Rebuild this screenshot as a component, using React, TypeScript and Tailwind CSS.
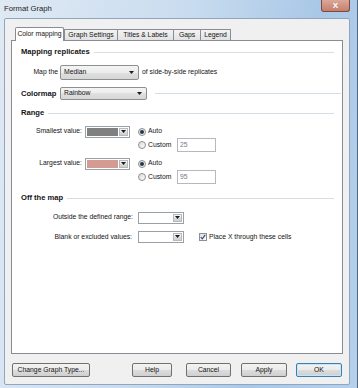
import React from 'react';

// Small black down-arrow used by the combo boxes
const Arrow = () => (
  <svg width="5" height="3" viewBox="0 0 5 3">
    <path d="M0 0H5L2.5 3Z" fill="#1b1b1b" />
  </svg>
);

const SectionHeading = ({ title, className = '' }: { title: string; className?: string }) => (
  <div className={`flex h-[12px] items-center ${className}`}>
    <span className="text-[7.6px] font-bold leading-none">{title}</span>
    <div className="ml-[4px] h-px flex-1 bg-[#d5dfe5]" />
  </div>
);

// Drop-down list that looks like a button (Median / Rainbow)
const DropList = ({ label, className }: { label: string; className: string }) => (
  <div
    className={`flex items-center justify-between rounded-[2px] border border-[#8e8f8f] bg-[linear-gradient(#f4f4f4,#ececec_50%,#e0e0e0_50%,#d6d6d6)] pl-[3px] pr-[4px] ${className}`}
  >
    <span className="leading-none">{label}</span>
    <Arrow />
  </div>
);

const ArrowButton = () => (
  <div className="flex w-[9px] items-center justify-center border border-[#b5b8bd] bg-[linear-gradient(#f4f4f4,#e6e6e6_50%,#d9d9d9_50%,#d0d0d0)]">
    <Arrow />
  </div>
);

const SwatchCombo = ({ swatch }: { swatch: string }) => (
  <div className="flex h-[12px] w-[45px] border border-[#9aa0a8] bg-white p-px">
    <div className={`mr-[1px] flex-1 ${swatch}`} />
    <ArrowButton />
  </div>
);

const EmptyCombo = () => (
  <div className="flex h-[12px] w-[46px] justify-end border border-[#9aa0a8] bg-white p-px">
    <ArrowButton />
  </div>
);

const Radio = ({ checked }: { checked?: boolean }) => (
  <span className="flex h-[8px] w-[8px] items-center justify-center rounded-full border border-[#8e8f8f] bg-gradient-to-br from-[#dcdcdc] to-[#fbfbfb]">
    {checked && <span className="h-[4px] w-[4px] rounded-full bg-[#25364a]" />}
  </span>
);

const Checkbox = () => (
  <span className="flex h-[8px] w-[8px] items-center justify-center border border-[#8e8f8f] bg-gradient-to-br from-[#dedede] to-[#fbfbfb]">
    <svg width="6" height="6" viewBox="0 0 6 6">
      <path d="M0.8 3.2L2.3 4.8L5.2 0.9" stroke="#3a4f86" strokeWidth="1.2" fill="none" />
    </svg>
  </span>
);

const CustomInput = ({ value }: { value: string }) => (
  <div className="flex h-[14px] w-[39px] items-center border border-[#b4b8c0] bg-white pl-[2px] text-[#7a7a7a]">
    <span className="leading-none">{value}</span>
  </div>
);

const RangeGroup = ({ label, swatch, custom, className = '' }: { label: string; swatch: string; custom: string; className?: string }) => (
  <div className={className}>
    <div className="flex h-[13px] items-center">
      <span className="w-[61px] text-right leading-none">{label}</span>
      <div className="ml-[3px]">
        <SwatchCombo swatch={swatch} />
      </div>
      <div className="ml-[8px] flex items-center gap-[2px]">
        <Radio checked />
        <span className="leading-none">Auto</span>
      </div>
    </div>
    <div className="flex h-[14px] items-center pl-[117px]">
      <div className="flex w-[39px] items-center gap-[2px]">
        <Radio />
        <span className="leading-none">Custom</span>
      </div>
      <CustomInput value={custom} />
    </div>
  </div>
);

const Btn = ({ label, className = '', primary = false }: { label: string; className?: string; primary?: boolean }) => (
  <div
    className={`flex h-[14px] items-center justify-center rounded-[2px] border bg-[linear-gradient(#f3f3f3,#ebebeb_50%,#dddddd_50%,#cfcfcf)] ${
      primary ? 'border-[#3c7fb1] shadow-[inset_0_0_0_1px_#c6e6f8]' : 'border-[#707070]'
    } ${className}`}
  >
    <span className="leading-none">{label}</span>
  </div>
);

const tabs = ['Graph Settings', 'Titles & Labels', 'Gaps', 'Legend'];
const tabWidths = ['w-[54px]', 'w-[57px]', 'w-[28px]', 'w-[31px]'];

export default function App() {
  return (
    <div
      className="flex h-[388px] w-[358px] flex-col border-r border-[#56677a] bg-[linear-gradient(100deg,#dfe9f4,#c9dcef_45%,#a9c8e7_75%,#b4d0ec)] text-[6.8px] text-[#141414]"
      style={{ fontFamily: '"Liberation Sans", Arial, sans-serif' }}
    >
      {/* Title bar */}
      <div className="flex h-[18px] items-start">
        <span className="ml-[4px] mt-[5px] text-[7.7px] leading-none text-[#1c1c1c]">Format Graph</span>
        <div className="ml-auto mr-[7px] flex h-[12px] w-[29px] items-center justify-center rounded-b-[3px] border border-t-0 border-[#7d4a40] bg-gradient-to-b from-[#dba898] to-[#c47f6c]">
          <span className="text-[8px] font-bold leading-none text-white">X</span>
        </div>
      </div>

      {/* Client area */}
      <div className="mb-[3px] ml-[4px] mr-[7px] flex flex-1 flex-col rounded-[2px] border border-[#8ea6bf] bg-[#f0f0f0] px-[6px] pt-[8px]">
        {/* Tabs */}
        <div className="flex h-[13px] items-end pl-[4px]">
          <div className="relative z-10 -mb-px flex h-[14px] w-[49px] items-center justify-center rounded-t-[2px] border border-b-0 border-[#898c95] bg-white">
            <span className="leading-none">Color mapping</span>
          </div>
          {tabs.map((t, i) => (
            <div
              key={t}
              className={`flex h-[11px] items-center justify-center rounded-t-[1px] border border-b-0 border-[#898c95] bg-gradient-to-b from-[#f3f3f3] to-[#e2e2e2] ${tabWidths[i]} ${
                i > 0 ? '-ml-px' : ''
              }`}
            >
              <span className="leading-none">{t}</span>
            </div>
          ))}
        </div>

        {/* Tab panel */}
        <div className="flex h-[314px] flex-col border border-[#898c95] bg-white pl-[9px] pr-[8px] pt-[5px]">
          <SectionHeading title="Mapping replicates" />

          <div className="mt-[7px] flex h-[15px] items-center">
            <span className="w-[37px] text-right leading-none">Map the</span>
            <DropList label="Median" className="ml-[2px] h-[15px] w-[79px]" />
            <span className="ml-[3px] leading-none">of side-by-side replicates</span>
          </div>

          <div className="mt-[7px] mr-[-7px] flex h-[13px] items-center">
            <span className="w-[39px] text-[7.6px] font-bold leading-none">Colormap</span>
            <DropList label="Rainbow" className="h-[13px] w-[87px]" />
            <div className="ml-[8px] h-px flex-1 bg-[#d5dfe5]" />
          </div>

          <SectionHeading title="Range" className="mt-[7px]" />
          <RangeGroup label="Smallest value:" swatch="bg-[#808080]" custom="25" className="mt-[6px]" />
          <RangeGroup label="Largest value:" swatch="bg-[#d49b93]" custom="95" className="mt-[5px]" />

          <SectionHeading title="Off the map" className="mt-[8px]" />

          <div className="mt-[7px] flex h-[13px] items-center">
            <span className="w-[112px] text-right leading-none">Outside the defined range:</span>
            <div className="ml-[5px]">
              <EmptyCombo />
            </div>
          </div>

          <div className="mt-[6px] flex h-[14px] items-center">
            <span className="w-[111px] text-right leading-none">Blank or excluded values:</span>
            <div className="ml-[6px] flex h-[13px]">
              <EmptyCombo />
            </div>
            <div className="ml-[15px] flex items-center gap-[2px]">
              <Checkbox />
              <span className="leading-none">Place X through these cells</span>
            </div>
          </div>
        </div>

        {/* Buttons */}
        <div className="mt-[9px] flex items-center pl-[1px]">
          <Btn label="Change Graph Type..." className="w-[78px]" />
          <Btn label="Help" className="ml-[42px] w-[40px]" />
          <Btn label="Cancel" className="ml-[14px] w-[45px]" />
          <Btn label="Apply" className="ml-[10px] w-[46px]" />
          <Btn label="OK" primary className="ml-[9px] w-[46px]" />
        </div>
      </div>
    </div>
  );
}
